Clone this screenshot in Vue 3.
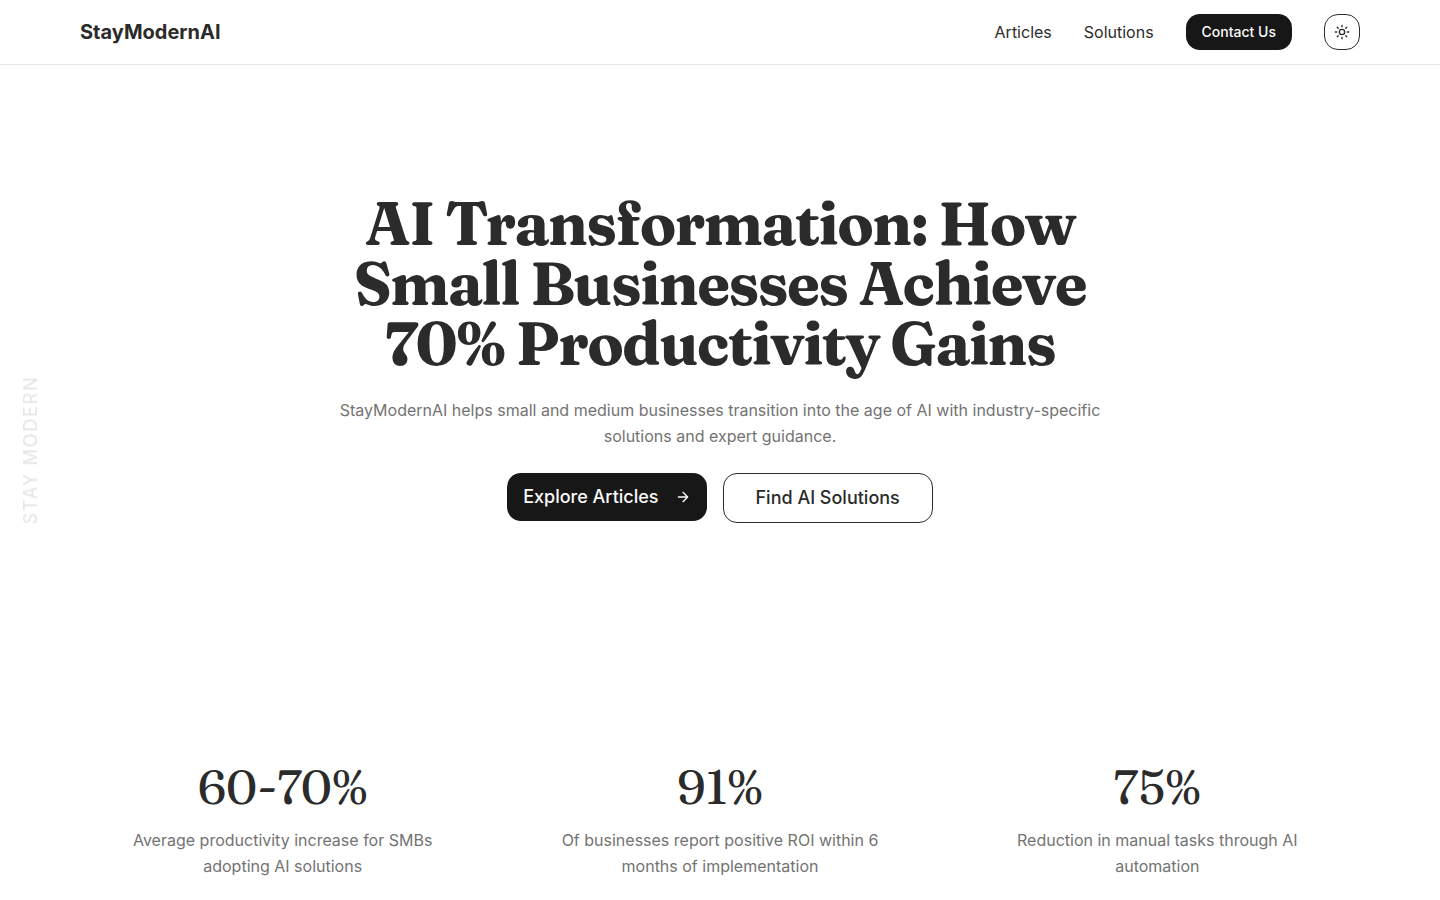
<script setup>
const stats = [
  { value: '60-70%', label: 'Average productivity increase for SMBs adopting AI solutions' },
  { value: '91%', label: 'Of businesses report positive ROI within 6 months of implementation' },
  { value: '75%', label: 'Reduction in manual tasks through AI automation' },
]
</script>

<template>
  <div class="page">
    <header class="header">
      <div class="container bar">
        <a class="brand" href="#">StayModernAI</a>
        <nav class="nav">
          <a href="#articles">Articles</a>
          <a href="#solutions">Solutions</a>
          <button class="contact" type="button">Contact Us</button>
          <button class="theme" type="button" aria-label="Toggle theme">
            <svg width="16" height="16" viewBox="0 0 24 24" fill="none" stroke="currentColor" stroke-width="2" stroke-linecap="round">
              <circle cx="12" cy="12" r="4" />
              <path d="M12 2v2M12 20v2M4.93 4.93l1.41 1.41M17.66 17.66l1.41 1.41M2 12h2M20 12h2M6.34 17.66l-1.41 1.41M19.07 4.93l-1.41 1.41" />
            </svg>
          </button>
        </nav>
      </div>
    </header>

    <aside class="side">STAY MODERN</aside>

    <main>
      <section class="hero">
        <h1>AI Transformation: How Small Businesses Achieve 70% Productivity Gains</h1>
        <p>StayModernAI helps small and medium businesses transition into the age of AI with industry-specific solutions and expert guidance.</p>
        <div class="actions">
          <a class="primary" href="#articles">
            Explore Articles
            <svg width="16" height="16" viewBox="0 0 24 24" fill="none" stroke="currentColor" stroke-width="2" stroke-linecap="round" stroke-linejoin="round" aria-hidden="true">
              <path d="M5 12h14M12 5l7 7-7 7" />
            </svg>
          </a>
          <a class="secondary" href="#solutions">Find AI Solutions</a>
        </div>
      </section>

      <section class="container stats">
        <div v-for="stat in stats" :key="stat.value" class="stat">
          <div class="value">{{ stat.value }}</div>
          <p>{{ stat.label }}</p>
        </div>
      </section>
    </main>
  </div>
</template>

<style>
body {
  margin: 0;
  background: #ffffff;
}
</style>

<style scoped>
.page {
  color: #2b2b2b;
  font-family: Inter, sans-serif;
  font-size: 16px;
  line-height: 26px;
}
.page *, .page {
  box-sizing: border-box;
}
a {
  color: inherit;
  text-decoration: none;
}
button {
  font-family: inherit;
  cursor: pointer;
}
.container {
  max-width: 1280px;
  margin: 0 auto;
}
.header {
  border-bottom: 1px solid #e5e5e5;
}
.bar {
  display: flex;
  align-items: center;
  justify-content: space-between;
  height: 64px;
}
.brand {
  font-size: 20px;
  font-weight: 700;
  line-height: 28px;
}
.nav {
  display: flex;
  align-items: center;
  gap: 32px;
}
.contact {
  height: 36px;
  padding: 0 16px;
  border: 0;
  border-radius: 14px;
  background: #171717;
  color: #fafafa;
  font-size: 14px;
  font-weight: 500;
  line-height: 20px;
}
.theme {
  display: flex;
  align-items: center;
  justify-content: center;
  width: 36px;
  height: 36px;
  padding: 0;
  border: 1px solid #2b2b2b;
  border-radius: 14px;
  background: transparent;
  color: #2b2b2b;
}
.side {
  position: fixed;
  left: 16px;
  top: 50%;
  transform: translateY(-50%) rotate(180deg);
  writing-mode: vertical-rl;
  color: #e5e5e5;
  font-size: 18px;
  line-height: 29px;
  letter-spacing: 0.1em;
}
.hero {
  max-width: 800px;
  margin: 0 auto;
  padding: 128px 0;
  text-align: center;
}
h1 {
  margin: 0 0 24px;
  font-family: Fraunces, "Liberation Serif", serif;
  font-size: 60px;
  font-weight: 700;
  line-height: 60px;
  letter-spacing: -0.025em;
}
p {
  margin: 0;
  color: #737373;
}
.actions {
  display: flex;
  align-items: flex-start;
  justify-content: center;
  gap: 16px;
  margin-top: 24px;
}
.primary, .secondary {
  display: flex;
  align-items: center;
  border-radius: 14px;
  font-size: 18px;
  font-weight: 500;
}
.primary {
  gap: 16px;
  height: 48px;
  padding: 0 16px;
  background: #171717;
  color: #fafafa;
}
.secondary {
  height: 50px;
  padding: 0 32px;
  border: 1px solid #2b2b2b;
}
.stats {
  display: grid;
  grid-template-columns: repeat(3, 1fr);
  gap: 32px;
  padding: 80px 0 0;
  text-align: center;
}
.stat {
  padding: 32px 32px 20px;
}
.value {
  margin-bottom: 16px;
  font-family: Fraunces, "Liberation Serif", serif;
  font-size: 48px;
  line-height: 48px;
}
</style>
